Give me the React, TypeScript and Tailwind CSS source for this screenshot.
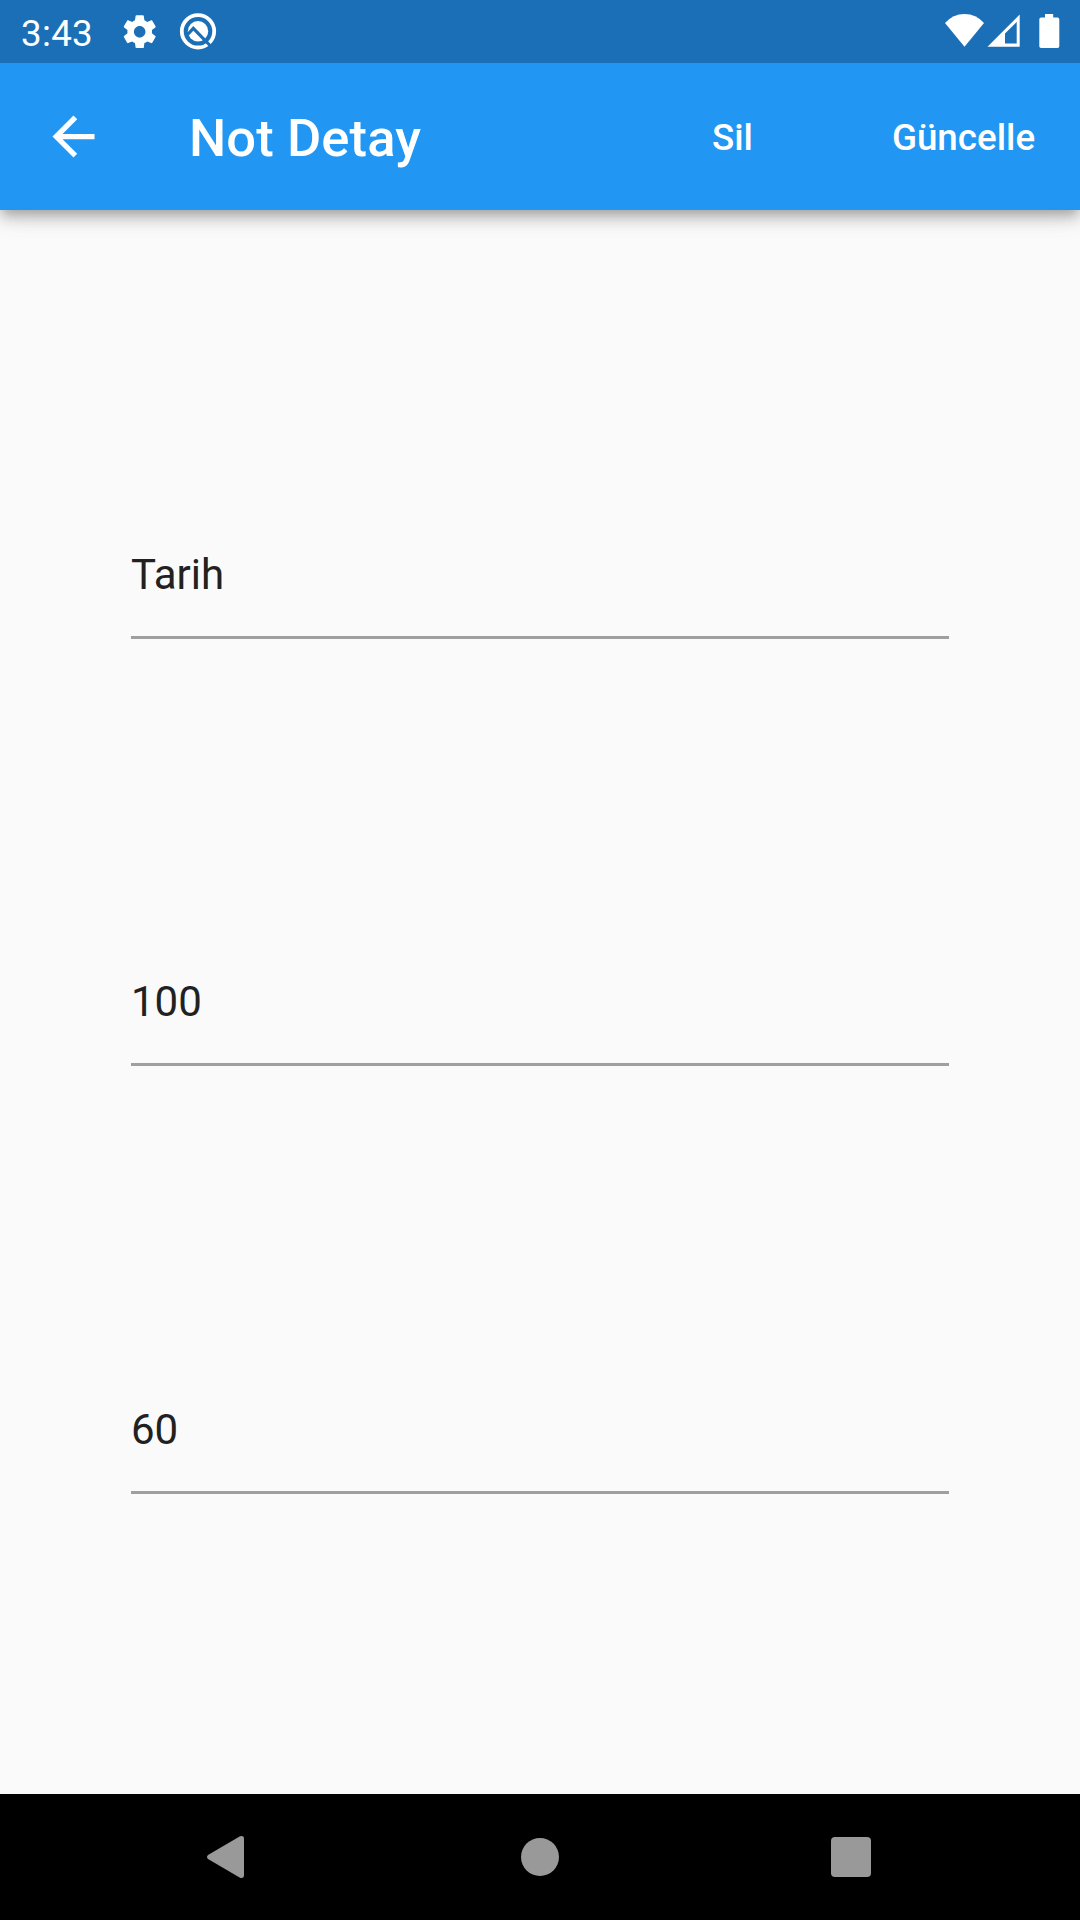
function StatusBar() {
  return (
    <div className="relative z-10 flex h-[63px] shrink-0 items-start bg-[#1a6fb6] text-white">
      <span className="ml-[21px] mt-[11.5px] w-[99.4px] text-[36.75px] leading-[43px] tracking-[0.3px]">3:43</span>
      <svg className="mt-[11.8px] h-[39.4px] w-[39.4px]" viewBox="0 0 24 24" fill="currentColor">
        <path d="M19.43 12.98c.04-.32.07-.64.07-.98s-.03-.66-.07-.98l2.11-1.65c.19-.15.24-.42.12-.64l-2-3.46c-.12-.22-.39-.3-.61-.22l-2.49 1c-.52-.4-1.08-.73-1.69-.98l-.38-2.65C14.46 2.18 14.25 2 14 2h-4c-.25 0-.46.18-.49.42l-.38 2.65c-.61.25-1.17.59-1.69.98l-2.49-1c-.23-.09-.49 0-.61.22l-2 3.46c-.13.22-.07.49.12.64l2.11 1.65c-.04.32-.07.65-.07.98s.03.66.07.98l-2.11 1.65c-.19.15-.24.42-.12.64l2 3.46c.12.22.39.3.61.22l2.49-1c.52.4 1.08.73 1.69.98l.38 2.65c.03.24.24.42.49.42h4c.25 0 .46-.18.49-.42l.38-2.65c.61-.25 1.17-.59 1.69-.98l2.49 1c.23.09.49 0 .61-.22l2-3.46c.12-.22.07-.49-.12-.64l-2.11-1.65zM12 15.5c-1.93 0-3.5-1.57-3.5-3.5s1.57-3.5 3.5-3.5 3.5 1.57 3.5 3.5-1.57 3.5-3.5 3.5z" />
      </svg>
      <svg className="ml-[18.2px] mt-[11px] h-10 w-10" viewBox="0 0 40 40" fill="none">
        <circle cx="20" cy="20.3" r="16.2" stroke="#fff" strokeWidth="3.8" />
        <circle cx="20" cy="20.3" r="10.2" fill="#fff" />
        <path d="M9.2 24L15.3 17.4L33 35.5" stroke="#1a6fb6" strokeWidth="3.2" />
      </svg>
      <svg className="ml-auto mt-3 h-10 w-[120px]" viewBox="0 0 120 40" fill="currentColor">
        <path d="M5 11Q13 2 24.5 2Q36 2 44 11L24.5 34.7Z" />
        <path fillRule="evenodd" d="M47.5 34.7L79.7 2.5V34.7ZM65 21.6V31.6H76.7V10Z" />
        <path d="M105 5.6V2h8.2v3.6h4.3q1.8 0 1.8 1.8v26.8q0 1.8-1.8 1.8h-16.4q-1.8 0-1.8-1.8V7.4q0-1.8 1.8-1.8Z" />
      </svg>
      <div className="w-5 shrink-0" />
    </div>
  );
}

function AppBar() {
  return (
    <header className="relative flex h-[147px] shrink-0 items-center bg-[#2196f3] font-medium text-white shadow-[0_5px_10px_-3px_rgba(0,0,0,0.2),0_10px_13px_0_rgba(0,0,0,0.14),0_3px_26px_0_rgba(0,0,0,0.12)]">
      <button className="ml-[42px] w-[147px]" aria-label="Geri">
        <svg className="h-[63px] w-[63px]" viewBox="0 0 24 24" fill="currentColor">
          <path d="M20 11H7.83l5.59-5.59L12 4l-8 8 8 8 1.41-1.41L7.83 13H20v-2z" />
        </svg>
      </button>
      <h1 className="flex-1 pt-[2px] text-[52.5px] leading-[62px] tracking-[0.1px]">Not Detay</h1>
      <button className="w-[231px] pr-[2px] pt-[2px] text-[36.75px]">Sil</button>
      <button className="w-[231px] pr-[2px] pt-[2px] text-[36.75px]">Güncelle</button>
    </header>
  );
}

function Field({ value }: { value: string }) {
  return (
    <div className="flex h-[427.4px] flex-col">
      <div className="mt-[143px] text-[42px] leading-[49px] text-[#212121]">{value}</div>
      <div className="mt-[37px] h-[3px] bg-[#9f9f9f]" />
    </div>
  );
}

export default function App() {
  return (
    <div className="flex h-[1920px] w-[1080px] flex-col overflow-hidden bg-[#fafafa] font-[Roboto,sans-serif]">
      <StatusBar />
      <AppBar />
      <main className="flex flex-1 flex-col px-[131px] pt-[197px]">
        <Field value="Tarih" />
        <Field value="100" />
        <Field value="60" />
      </main>
      <nav className="flex h-[126px] shrink-0 items-center bg-black pl-[206px] text-[#999]">
        <svg className="h-[44px] w-[40px]" viewBox="0 0 40 44" fill="currentColor">
          <path d="M2 20L34 1.3Q38 0 38 4V40Q38 44 34 42.7L2 24Q0 22 2 20Z" />
        </svg>
        <div className="ml-[275px] h-[38px] w-[38px] rounded-full bg-[#999]" />
        <div className="ml-[272px] h-10 w-10 rounded-[4px] bg-[#999]" />
      </nav>
    </div>
  );
}
